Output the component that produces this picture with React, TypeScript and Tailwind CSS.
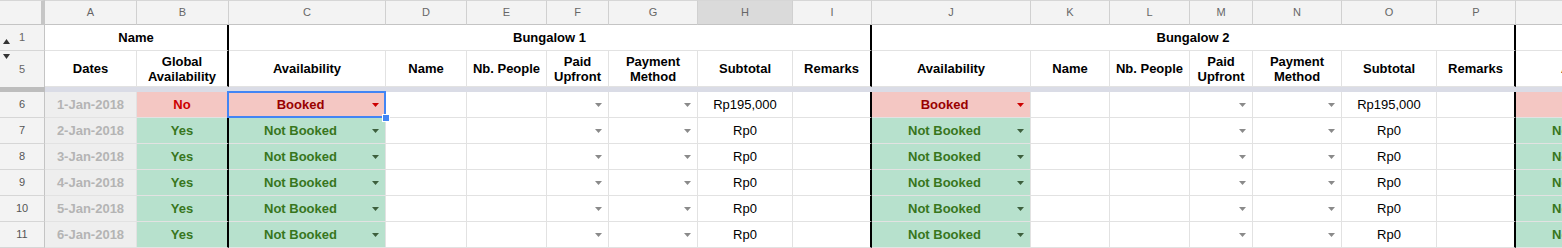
import React from 'react';

type Tone = 'booked' | 'free' | 'none';

const LETTERS = ['A', 'B', 'C', 'D', 'E', 'F', 'G', 'H', 'I', 'J', 'K', 'L', 'M', 'N', 'O', 'P', ''];

const ROWS = [
  { n: 6, date: '1-Jan-2018', booked: true },
  { n: 7, date: '2-Jan-2018', booked: false },
  { n: 8, date: '3-Jan-2018', booked: false },
  { n: 9, date: '4-Jan-2018', booked: false },
  { n: 10, date: '5-Jan-2018', booked: false },
  { n: 11, date: '6-Jan-2018', booked: false },
];

const Cell = ({
  className = '',
  black = false,
  children,
}: {
  className?: string;
  black?: boolean;
  children?: React.ReactNode;
}) => (
  <div
    className={`flex min-w-0 items-center justify-center whitespace-nowrap border-b border-b-[#e2e2e2] ${
      black ? 'border-r-2 border-r-black' : 'border-r border-r-[#e2e2e2]'
    } ${className}`}
  >
    {children}
  </div>
);

const Arrow = ({ color }: { color: string }) => (
  <svg width="7" height="4" viewBox="0 0 7 4" className="mr-[6px] shrink-0">
    <polygon points="0,0 7,0 3.5,4" fill={color} />
  </svg>
);

const Drop = ({
  tone,
  black = false,
  selected = false,
}: {
  tone: Tone;
  black?: boolean;
  selected?: boolean;
}) => {
  const bg = tone === 'booked' ? 'bg-[#f4c7c3]' : tone === 'free' ? 'bg-[#b7e1cd]' : 'bg-white';
  const text = tone === 'booked' ? 'text-[#990000]' : 'text-[#38761d]';
  const arrow = tone === 'booked' ? '#cc0000' : tone === 'free' ? '#3d5f3d' : '#8a8a8a';
  return (
    <Cell black={black} className={`${bg} ${selected ? 'relative' : ''}`}>
      <div className="flex h-full w-full items-center overflow-hidden">
        <span className={`flex-1 text-center font-bold ${text}`}>
          {tone === 'booked' ? 'Booked' : tone === 'free' ? 'Not Booked' : ''}
        </span>
        <Arrow color={arrow} />
      </div>
      {selected && (
        <>
          <div className="absolute left-[-2px] top-[-1px] right-[-1px] bottom-[-1px] border-2 border-[#4285f4]" />
          <div className="absolute right-[-5px] bottom-[-5px] z-10 h-[8px] w-[8px] border border-white bg-[#4285f4]" />
        </>
      )}
    </Cell>
  );
};

const Head = ({ children, black = false }: { children?: React.ReactNode; black?: boolean }) => (
  <Cell black={black} className="bg-white text-center font-bold leading-[15px] text-black">
    {children}
  </Cell>
);

const BungalowHead = () => (
  <>
    <Head>Availability</Head>
    <Head>Name</Head>
    <Head>Nb. People</Head>
    <Head>
      Paid
      <br />
      Upfront
    </Head>
    <Head>
      Payment
      <br />
      Method
    </Head>
    <Head>Subtotal</Head>
    <Head black>Remarks</Head>
  </>
);

const BungalowRow = ({ booked, selected = false }: { booked: boolean; selected?: boolean }) => (
  <>
    <Drop tone={booked ? 'booked' : 'free'} selected={selected} />
    <Cell />
    <Cell />
    <Drop tone="none" />
    <Drop tone="none" />
    <Cell className="text-black">{booked ? 'Rp195,000' : 'Rp0'}</Cell>
    <Cell black />
  </>
);

export default function App() {
  return (
    <div className="h-[248px] w-[1562px] overflow-hidden bg-white font-['Liberation_Sans',Arial,sans-serif] text-[13px]">
      <div className="grid grid-cols-[45px_92px_92px_157px_81px_80px_62px_89px_95px_79px_159px_79px_80px_63px_89px_95px_79px_159px] grid-rows-[25px_26px_36px_5px_26px_26px_26px_26px_26px_26px]">
        {/* column letters */}
        <div className="border-t border-b border-r-4 border-t-[#d6d6d6] border-b-[#c4c4c4] border-r-[#c6c6c6] bg-[#f3f3f3]" />
        {LETTERS.map((l, i) => (
          <div
            key={i}
            className={`flex items-center justify-center border-t border-b border-r border-t-[#d6d6d6] border-b-[#c4c4c4] border-r-[#d0d0d0] text-[11px] text-[#666] ${
              l === 'H' ? 'bg-[#dadada]' : 'bg-[#f3f3f3]'
            }`}
          >
            {l}
          </div>
        ))}

        {/* row 1 */}
        <div className="relative flex items-center justify-center border-b border-r border-b-[#d6d6d6] border-r-[#c4c4c4] bg-[#f3f3f3] text-[11px] text-[#666]">
          1
          <svg width="7" height="5" viewBox="0 0 7 5" className="absolute left-[3px] bottom-[6px]">
            <polygon points="0,5 7,5 3.5,0" fill="#333" />
          </svg>
        </div>
        <Cell black className="col-span-2 bg-white font-bold text-black">
          Name
        </Cell>
        <Cell black className="col-span-7 bg-white font-bold text-black">
          Bungalow 1
        </Cell>
        <Cell black className="col-span-7 bg-white font-bold text-black">
          Bungalow 2
        </Cell>
        <Cell className="bg-white" />

        {/* row 5 */}
        <div className="relative flex items-center justify-center border-r border-r-[#c4c4c4] bg-[#f3f3f3] text-[11px] text-[#666]">
          5
          <svg width="7" height="5" viewBox="0 0 7 5" className="absolute left-[3px] top-[3px]">
            <polygon points="0,0 7,0 3.5,5" fill="#333" />
          </svg>
        </div>
        <Head>Dates</Head>
        <Head black>
          Global
          <br />
          Availability
        </Head>
        <BungalowHead />
        <BungalowHead />
        <Head>Availability</Head>

        {/* freeze bar */}
        <div className="bg-[#bdbdbd]" />
        <div className="col-span-17 bg-[#dadce6]" />

        {ROWS.map((r) => (
          <React.Fragment key={r.n}>
            <div className="flex items-center justify-center border-b border-r border-b-[#d6d6d6] border-r-[#c4c4c4] bg-[#f3f3f3] text-[11px] text-[#555]">
              {r.n}
            </div>
            <Cell className="bg-[#eeeeee] font-bold text-[#b4b4b4]">{r.date}</Cell>
            <Cell
              black
              className={`font-bold ${r.booked ? 'bg-[#f4c7c3] text-[#cc0000]' : 'bg-[#b7e1cd] text-[#38761d]'}`}
            >
              {r.booked ? 'No' : 'Yes'}
            </Cell>
            <BungalowRow booked={r.booked} selected={r.booked} />
            <BungalowRow booked={r.booked} />
            <Drop tone={r.booked ? 'booked' : 'free'} />
          </React.Fragment>
        ))}
      </div>
    </div>
  );
}
